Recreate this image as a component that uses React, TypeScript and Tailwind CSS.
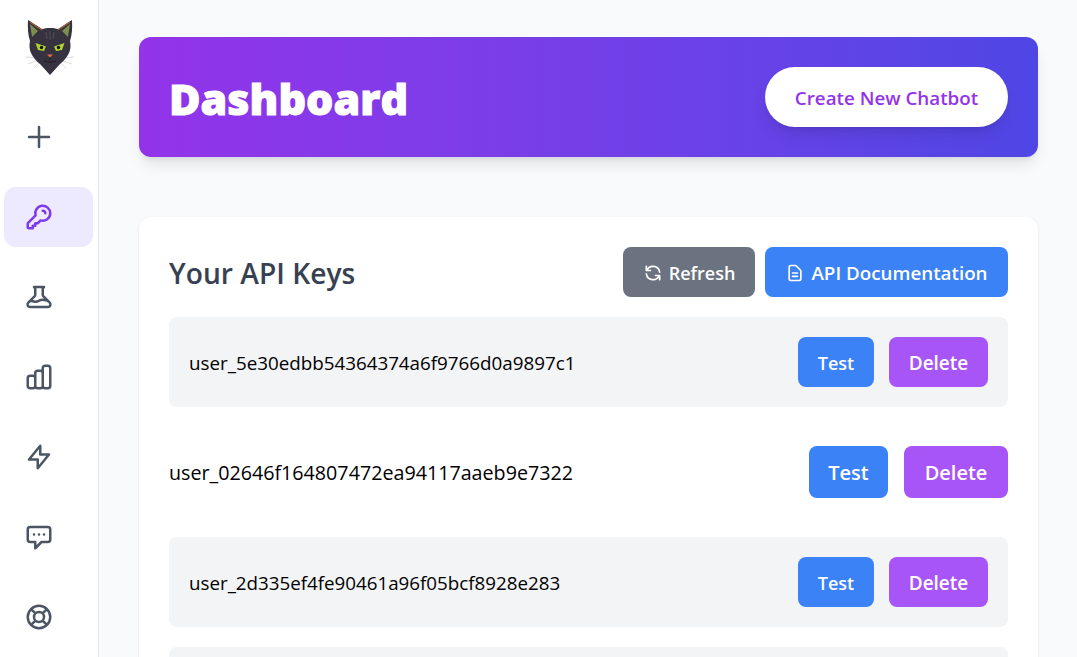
import React from "react";
import {
  HiOutlinePlus,
  HiOutlineKey,
  HiOutlineBeaker,
  HiOutlineChartBar,
  HiOutlineLightningBolt,
  HiOutlineChatAlt,
  HiOutlineSupport,
  HiOutlineRefresh,
  HiOutlineDocumentText,
} from "react-icons/hi";

function CatLogo() {
  return (
    <svg className="w-[60px] h-[65px] blur-[0.3px]" viewBox="20 15 60 65">
      <g stroke="#bdb9b9" strokeWidth="0.5" fill="none">
        <path d="M39 58 26 57M39 60 28 64M40 62 34 68" />
        <path d="M60 58 74 57M60 60 72 64M59 62 66 68" />
      </g>
      <path d="M28 20 42 29C46 27.500 54 27.500 58 29L72 20C72.500 28 72 35 70 41C71 46 70.500 50 69 53C67 57 63 62 60 64L50 75L40 64C37 62 33 57 31 53C29.500 50 29 46 30 41C28 35 27.500 28 28 20Z" fill="#37323f" />
      <path d="M30 24 38 31 32 37Z" fill="#7d8f4d" />
      <path d="M70 24 62 31 68 37Z" fill="#7d8f4d" />
      <path d="M30 22 42 30M70 22 58 30" stroke="#a5673a" strokeWidth="1.200" />
      <path d="M50 31v9M46 32l1 7M54 32l-1 7" stroke="#56525c" strokeWidth="0.900" />
      <path d="M35.500 43 46 46.500 44 51 38 50Z" fill="#b0d12f" />
      <path d="M64.500 43 54 46.500 56 51 62 50Z" fill="#b0d12f" />
      <circle cx="41.500" cy="47.500" r="1.700" fill="#15131a" />
      <circle cx="58.500" cy="47.500" r="1.700" fill="#15131a" />
      <path d="M47 54.500h6l-3 3Z" fill="#e8694a" />
      <path d="M50 57.500v3M44 61q6 3 12 0" stroke="#15131a" strokeWidth="0.700" fill="none" />
    </svg>
  );
}

const navItems = [
  { icon: HiOutlinePlus },
  { icon: HiOutlineKey, active: true },
  { icon: HiOutlineBeaker },
  { icon: HiOutlineChartBar },
  { icon: HiOutlineLightningBolt },
  { icon: HiOutlineChatAlt },
  { icon: HiOutlineSupport },
];

const keys = [
  { value: "user_5e30edbb54364374a6f9766d0a9897c1", size: "text-[18.8px]" },
  { value: "user_02646f164807472ea94117aaeb9e7322", size: "text-[19.7px]" },
  { value: "user_2d335ef4fe90461a96f05bcf8928e283", size: "text-[18.75px]" },
];

function KeyRow({ value, size, index }: { value: string; size: string; index: number }) {
  if (index % 2 === 1) {
    return (
      <div className="flex items-center justify-between h-[90px] mb-5">
        <span className={`${size} text-black pt-0.5`}>{value}</span>
        <div className="flex items-center gap-4">
          <button className="w-[79px] h-[52px] pt-0.5 rounded-lg bg-[#3b82f6] text-white text-[20px] font-semibold">Test</button>
          <button className="w-[104px] h-[52px] pt-0.5 rounded-lg bg-[#a855f7] text-white text-[20px] font-semibold">Delete</button>
        </div>
      </div>
    );
  }
  return (
    <div className="flex items-center justify-between h-[90px] mb-5 p-5 rounded-lg bg-[#f3f4f6]">
      <span className={`${size} text-black pt-0.5`}>{value}</span>
      <div className="flex items-center gap-[15px]">
        <button className="w-[76px] h-[50px] pt-0.5 rounded-lg bg-[#3b82f6] text-white text-lg font-semibold">Test</button>
        <button className="w-[99px] h-[50px] pt-0.5 rounded-lg bg-[#a855f7] text-white text-[19px] font-semibold">Delete</button>
      </div>
    </div>
  );
}

export default function App() {
  return (
    <div className="flex h-screen overflow-hidden bg-[#f9fafb] font-['Open_Sans','Noto_Sans',sans-serif]">
      <aside className="w-[99px] shrink-0 border-r border-[#e5e7eb] bg-white flex flex-col pt-[15px] pl-1 pr-[5px]">
        <div className="h-[65px] pl-4 mb-[27px]">
          <CatLogo />
        </div>
        <nav className="flex flex-col gap-5">
          {navItems.map((item, i) => (
            <a
              key={i}
              className={`flex items-center h-[60px] pl-5 rounded-xl ${item.active ? "bg-[#ede9fe] text-[#7c3aed]" : "text-[#4b5563]"}`}
            >
              <item.icon className="w-[30px] h-[30px]" />
            </a>
          ))}
        </nav>
      </aside>

      <main className="flex-1 pt-[37px] pl-10 pr-[39px] min-w-0">
        <header className="flex items-center justify-between h-[120px] px-[30px] mb-[60px] rounded-xl text-white bg-gradient-to-r from-[#9333ea] to-[#4f46e5] shadow-lg">
          <h1 className="text-[43px] font-extrabold pt-[5px] [-webkit-text-stroke:1px_white]">Dashboard</h1>
          <button className="h-[60px] w-[243px] pt-0.5 rounded-full bg-white text-[#9333ea] text-[18.8px] font-semibold shadow-lg">Create New Chatbot</button>
        </header>

        <section className="bg-white rounded-xl shadow-sm p-[30px]">
          <div className="flex items-center justify-between mb-5">
            <h2 className="text-[28.2px] pt-0.5 font-semibold text-[#374151]">Your API Keys</h2>
            <div className="flex gap-2.5">
              <button className="flex items-center justify-center gap-1.5 w-[132px] h-[50px] pt-0.5 rounded-lg bg-[#6b7280] text-white text-lg font-semibold">
                <HiOutlineRefresh className="w-5 h-5" />
                Refresh
              </button>
              <button className="flex items-center justify-center gap-1.5 w-[243px] h-[50px] pt-0.5 rounded-lg bg-[#3b82f6] text-white text-[18.8px] font-semibold">
                <HiOutlineDocumentText className="w-5 h-5" />
                API Documentation
              </button>
            </div>
          </div>
          {keys.map((k, i) => (
            <KeyRow key={k.value} value={k.value} size={k.size} index={i} />
          ))}
          <div className="h-[90px] rounded-lg bg-[#f3f4f6]" />
        </section>
      </main>
    </div>
  );
}
